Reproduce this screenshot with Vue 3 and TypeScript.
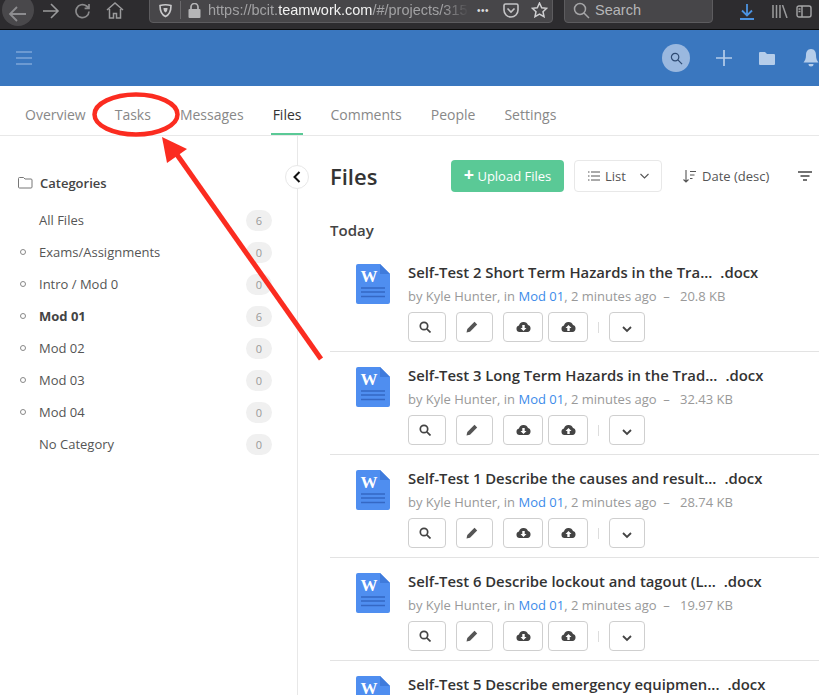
<script setup lang="ts">
const tabs = ['Overview', 'Tasks', 'Messages', 'Files', 'Comments', 'People', 'Settings']

const categories = [
  { name: 'All Files', count: 6, dot: false },
  { name: 'Exams/Assignments', count: 0, dot: true },
  { name: 'Intro / Mod 0', count: 0, dot: true },
  { name: 'Mod 01', count: 6, dot: true, bold: true },
  { name: 'Mod 02', count: 0, dot: true },
  { name: 'Mod 03', count: 0, dot: true },
  { name: 'Mod 04', count: 0, dot: true },
  { name: 'No Category', count: 0, dot: false },
]

const files = [
  { title: 'Self-Test 2 Short Term Hazards in the Tra...', size: '20.8 KB' },
  { title: 'Self-Test 3 Long Term Hazards in the Trad...', size: '32.43 KB' },
  { title: 'Self-Test 1 Describe the causes and result...', size: '28.74 KB' },
  { title: 'Self-Test 6 Describe lockout and tagout (L...', size: '19.97 KB' },
  { title: 'Self-Test 5 Describe emergency equipmen...', size: '21.4 KB' },
]
</script>

<template>
  <div class="page">
    <div class="chrome">
      <span class="nav-back">
        <svg width="20" height="16" viewBox="0 0 20 16" fill="none" stroke="#8d8d90" stroke-width="1.8"><path d="M18 8H2M9 1L2 8l7 7" /></svg>
      </span>
      <svg class="nav" width="18" height="16" viewBox="0 0 18 16" fill="none" stroke="#9a9a9c" stroke-width="1.6"><path d="M1 8h15M9 1l7 7-7 7" /></svg>
      <svg class="nav" width="18" height="16" viewBox="0 0 18 16" fill="none" stroke="#8a8a8c" stroke-width="1.7"><path d="M15 8.5A6.5 6.5 0 1 1 12.5 3L15 5M15 1v4.4h-4.4" /></svg>
      <svg class="nav" width="18" height="17" viewBox="0 0 18 17" fill="none" stroke="#9a9a9c" stroke-width="1.5"><path d="M1 8l8-7 8 7M3.5 7v9h4v-4.5h3V16h4V7" /></svg>
      <div class="urlbar">
        <svg width="15" height="15" viewBox="0 0 15 15" fill="none" stroke="#c9c9cb" stroke-width="1.6"><path d="M2 2.500c3.500-1 7.500-1 11 0 0 5-1 9-5.500 11C3 11.500 2 7.500 2 2.500z" /><path d="M5.500 5h4c0 2-.5 3.500-2 4.500-1.500-1-2-2.500-2-4.500z" fill="#c9c9cb" stroke="none" /></svg>
        <i class="url-sep"></i>
        <svg width="13" height="15" viewBox="0 0 13 15" fill="#b5b5b7" stroke="none"><rect x="0.500" y="6" width="12" height="9" rx="1" /><path d="M3 6V4a3.500 3.500 0 0 1 7 0v2" fill="none" stroke="#b5b5b7" stroke-width="1.700" /></svg>
        <span class="url"><span>https://bcit.</span><b>teamwork.com</b><span>/#/projects/315</span></span>
        <span class="dots">•••</span>
        <svg width="16" height="15" viewBox="0 0 16 15" fill="none" stroke="#c4c4c6" stroke-width="1.600"><path d="M1 2.500C1 1.500 1.700 1 2.500 1h11c.8 0 1.500.5 1.500 1.500V7a7 7 0 0 1-14 0z" /><path d="M4.500 5.500L8 9l3.500-3.500" /></svg>
        <svg width="17" height="16" viewBox="0 0 17 16" fill="none" stroke="#d0d0d2" stroke-width="1.500"><path d="M8.500 1l2.200 4.700 5 .6-3.700 3.400 1 5-4.500-2.500L4 14.700l1-5L1.300 6.300l5-.6z" /></svg>
      </div>
      <div class="searchbar">
        <svg width="17" height="17" viewBox="0 0 17 17" fill="none" stroke="#a5a5a7" stroke-width="1.500"><circle cx="7" cy="7" r="5.500" /><path d="M11 11l5 5" /></svg>
        <span>Search</span>
      </div>
      <svg class="download" width="14" height="16" viewBox="0 0 14 16" fill="none" stroke="#4c93e0" stroke-width="1.800"><path d="M7 0v11M2 6.500L7 11.500l5-5M0 15h14" /></svg>
      <svg class="library" width="16" height="13" viewBox="0 0 16 13" fill="none" stroke="#9a9a9c" stroke-width="1.500"><path d="M1 0v13M4.500 0v13M8 0v13M10.500 0l4.500 13" /></svg>
      <svg class="sidebar-icon" width="16" height="13" viewBox="0 0 16 13" fill="none" stroke="#a5a5a7" stroke-width="1.400"><rect x="1" y="1" width="14" height="11" rx="2" /><path d="M6 1v11M2.500 4H4.500M2.500 6.500H4.500" /></svg>
    </div>

    <header class="topbar">
      <svg class="menu" width="16" height="14" viewBox="0 0 16 14" stroke="#7da6d9" stroke-width="1.300"><path d="M0 1h16M0 7h16M0 13h16" /></svg>
      <span class="spacer"></span>
      <span class="search-circle">
        <svg width="13" height="13" viewBox="0 0 14 14" fill="none" stroke="#2e4a72" stroke-width="1.300"><circle cx="5.500" cy="5.500" r="4" /><path d="M8.500 8.500l4.500 4.500" /></svg>
      </span>
      <svg class="plus" width="16" height="16" viewBox="0 0 16 16" stroke="#b5cdea" stroke-width="1.700"><path d="M8 0v16M0 8h16" /></svg>
      <svg class="folder" width="16" height="13" viewBox="0 0 16 13" fill="#b5cdea"><path d="M0 1a1 1 0 0 1 1-1h5l2 2h7a1 1 0 0 1 1 1v9a1 1 0 0 1-1 1H1a1 1 0 0 1-1-1z" /></svg>
      <svg class="bell" width="16" height="18" viewBox="0 0 16 18" fill="#b5cdea"><path d="M8 0c3.500 0 5 3 5 6 0 4 1 5.500 2.500 7.500H.5C2 11.500 3 10 3 6c0-3 1.500-6 5-6zM5.500 15h5a2.500 2.500 0 0 1-5 0z" /></svg>
    </header>

    <nav class="tabs">
      <a v-for="tab in tabs" :key="tab" :class="{ active: tab === 'Files' }">{{ tab }}</a>
    </nav>

    <div class="content">
      <aside class="sidebar">
        <button class="collapse">
          <svg width="8" height="12" viewBox="0 0 8 12" fill="none" stroke="#111" stroke-width="2"><path d="M6.500 1L1.500 6l5 5" /></svg>
        </button>
        <h3 class="cat-title">
          <svg width="15" height="12" viewBox="0 0 15 12" fill="none" stroke="#777" stroke-width="1"><path d="M.5 1.500a1 1 0 0 1 1-1h4l1.500 1.500h6a1 1 0 0 1 1 1v7a1 1 0 0 1-1 1h-11.500a1 1 0 0 1-1-1z" /></svg>
          Categories
        </h3>
        <ul class="cats">
          <li v-for="cat in categories" :key="cat.name" :class="{ bold: cat.bold }">
            <i :class="{ dot: cat.dot }"></i>
            <span class="cat-name">{{ cat.name }}</span>
            <span class="pill">{{ cat.count }}</span>
          </li>
        </ul>
      </aside>

      <main class="main">
        <div class="toolbar">
          <h1>Files</h1>
          <button class="upload"><b>+</b> Upload Files</button>
          <button class="list">
            <svg width="12" height="10" viewBox="0 0 12 10" stroke="#555" stroke-width="1"><path d="M3 1h9M3 5h9M3 9h9M0 1h1.500M0 5h1.500M0 9h1.500" /></svg>
            <span>List</span>
            <svg class="caret" width="9" height="6" viewBox="0 0 9 6" fill="none" stroke="#555" stroke-width="1.100"><path d="M.5 1l4 4 4-4" /></svg>
          </button>
          <span class="sort">
            <svg width="13" height="13" viewBox="0 0 13 13" fill="none" stroke="#555" stroke-width="1.100"><path d="M3 0v12M.5 9.500L3 12l2.500-2.500M7 1.500h6M7 5h4.500M7 8.500h2.500" /></svg>
            Date (desc)
          </span>
          <svg class="filter" width="14" height="10" viewBox="0 0 14 10" stroke="#444" stroke-width="1.400"><path d="M0 1h14M2.500 5h9M5 9h4" /></svg>
        </div>

        <h2>Today</h2>

        <div v-for="file in files" :key="file.title" class="file">
          <svg class="doc" width="34" height="40" viewBox="0 0 34 40">
            <path d="M2 0h22l10 10v28a2 2 0 0 1-2 2H2a2 2 0 0 1-2-2V2a2 2 0 0 1 2-2z" fill="#4f8ef0" />
            <path d="M24 0l10 10H24z" fill="#3f7bdc" />
            <text x="4.500" y="18" class="doc-w">W</text>
            <path d="M5 24h24M5 28h24M5 32.500h24" stroke="#3568c4" stroke-width="1.600" />
          </svg>
          <div class="file-body">
            <div class="file-title"><span>{{ file.title }}</span><span class="ext">.docx</span></div>
            <div class="meta">by Kyle Hunter, in <a>Mod 01</a>, 2 minutes ago &nbsp;–&nbsp;&nbsp; {{ file.size }}</div>
            <div class="actions">
              <button class="b1">
                <svg width="12" height="12" viewBox="0 0 12 12" fill="none" stroke="#444" stroke-width="1.700"><circle cx="5" cy="5" r="3.700" /><path d="M7.800 7.800L11.500 11.500" /></svg>
              </button>
              <button class="b2">
                <svg width="12" height="12" viewBox="0 0 12 12" fill="#555"><path d="M8.500.8l2.700 2.700L4 10.700.5 11.500l.8-3.500z" /></svg>
              </button>
              <button class="b3">
                <svg width="15" height="12" viewBox="0 0 15 12" fill="#444"><path d="M3.500 11a3.300 3.300 0 0 1-.5-6.500A4.700 4.700 0 0 1 12 4a3.600 3.600 0 0 1-.5 7z" /><path d="M6.300 4h2.400v3H10.500L7.500 10 4.500 7h1.800z" fill="#fff" /></svg>
              </button>
              <button class="b3">
                <svg width="15" height="12" viewBox="0 0 15 12" fill="#444"><path d="M3.500 11a3.300 3.300 0 0 1-.5-6.500A4.700 4.700 0 0 1 12 4a3.600 3.600 0 0 1-.5 7z" /><path d="M6.300 10h2.400V7H10.500L7.500 4 4.500 7h1.800z" fill="#fff" /></svg>
              </button>
              <i class="act-sep"></i>
              <button class="b5">
                <svg width="10" height="7" viewBox="0 0 10 7" fill="none" stroke="#444" stroke-width="1.800"><path d="M1 1l4 4 4-4" /></svg>
              </button>
            </div>
          </div>
        </div>
      </main>
    </div>

    <!-- red annotation drawn over the screenshot -->
    <svg class="markup" width="819" height="695" viewBox="0 0 819 695" fill="none">
      <ellipse cx="136" cy="114.500" rx="41.500" ry="20" stroke="#fb2c20" stroke-width="4.500" />
      <path d="M321 359L173 149" stroke="#fb2c20" stroke-width="5" />
      <path d="M162 137L187 149L167 163z" fill="#fb2c20" />
    </svg>
  </div>
</template>

<style scoped>
.page {
  position: relative;
  width: 819px;
  height: 695px;
  overflow: hidden;
  background: #fff;
  font-family: "Open Sans", sans-serif;
  color: #444;
}

.chrome {
  display: flex;
  align-items: center;
  height: 29px;
  background: #2d2c2f;
  border-bottom: 1px solid #0b0b0b;
  overflow: hidden;
  font-family: "Liberation Sans", sans-serif;
}
.nav-back {
  flex: none;
  display: flex;
  align-items: center;
  justify-content: center;
  width: 32px;
  height: 32px;
  margin: -10px 0 0 2px;
  border-radius: 50%;
  background: #49484b;
}
.nav-back svg {
  margin-top: 9px;
}
.nav {
  flex: none;
  margin: -8px 0 0 8px;
}
.nav + .nav {
  margin-left: 14px;
}
.urlbar {
  flex: none;
  display: flex;
  align-items: center;
  width: 404px;
  height: 30px;
  box-sizing: border-box;
  margin: -14px 0 0 25px;
  padding: 5px 4px 0 8px;
  background: #474649;
  border: 1px solid #5d5c5f;
  border-radius: 4px;
}
.url-sep {
  width: 1px;
  height: 18px;
  margin: 0 7px;
  background: #6a696c;
}
.url {
  flex: 1;
  margin-left: 7px;
  overflow: hidden;
  white-space: nowrap;
  font-size: 14.500px;
  color: #a2a2a4;
  -webkit-mask-image: linear-gradient(to right, #000 90%, transparent);
  mask-image: linear-gradient(to right, #000 90%, transparent);
}
.url b {
  font-weight: 400;
  color: #f2f2f2;
}
.dots {
  margin: 0 14px 0 8px;
  font-size: 10px;
  letter-spacing: 0.5px;
  color: #ddd;
}
.urlbar svg:last-child {
  margin-left: 12px;
}
.searchbar {
  flex: none;
  display: flex;
  align-items: center;
  gap: 5px;
  width: 149px;
  height: 30px;
  box-sizing: border-box;
  margin: -14px 0 0 11px;
  padding: 5px 0 0 8px;
  background: #474649;
  border: 1px solid #5d5c5f;
  border-radius: 4px;
  font-size: 14.500px;
  color: #b5b5b7;
}
.download {
  flex: none;
  margin: -6px 0 0 27px;
}
.library {
  flex: none;
  margin: -6px 0 0 18px;
}
.sidebar-icon {
  flex: none;
  margin: -6px 0 0 8px;
}

.topbar {
  display: flex;
  align-items: center;
  height: 56px;
  padding: 0 0 0 16px;
  background: #3a77bf;
}
.spacer {
  flex: 1;
}
.search-circle {
  display: flex;
  align-items: center;
  justify-content: center;
  width: 28px;
  height: 28px;
  border-radius: 50%;
  background: #9ab8df;
}
.plus {
  margin-left: 26px;
}
.folder {
  margin-left: 27px;
}
.bell {
  margin-left: 28px;
  flex: none;
}

.tabs {
  display: flex;
  gap: 25px;
  height: 50px;
  padding: 0 0 0 23px;
  border-bottom: 1px solid #e8e8e8;
  box-sizing: border-box;
  font-size: 14px;
  line-height: 57px;
  color: #888;
}
.tabs a {
  padding: 0 2px;
  height: 49px;
  box-sizing: border-box;
}
.tabs a.active {
  color: #333;
  border-bottom: 2px solid #5ac996;
}

.content {
  display: flex;
}
.sidebar {
  position: relative;
  flex: none;
  width: 298px;
  height: 560px;
  box-sizing: border-box;
  padding: 0 25px 0 18px;
  border-right: 1px solid #e8e8e8;
}
.collapse {
  position: absolute;
  top: 29px;
  right: -12px;
  width: 24px;
  height: 24px;
  padding: 0;
  display: flex;
  align-items: center;
  justify-content: center;
  background: #fff;
  border: 1px solid #e8e8e8;
  border-radius: 50%;
}
.cat-title {
  display: flex;
  align-items: center;
  gap: 7px;
  margin: 38px 0 0;
  height: 18px;
  font-size: 13px;
  font-weight: 600;
  color: #444;
}
.cats {
  list-style: none;
  margin: 12px 0 0;
  padding: 0;
}
.cats li {
  display: flex;
  align-items: center;
  height: 32px;
  font-size: 13px;
  color: #555;
}
.cats li i {
  flex: none;
  width: 6px;
  height: 6px;
  margin: 0 13px 0 2px;
  box-sizing: border-box;
  border-radius: 50%;
}
.cats li i.dot {
  border: 1px solid #888;
}
.cats li.bold {
  font-weight: 700;
  color: #444;
}
.cat-name {
  flex: 1;
}
.pill {
  width: 26px;
  height: 21px;
  border-radius: 11px;
  background: #f0f0f0;
  font-size: 11px;
  font-weight: 400;
  line-height: 21px;
  text-align: center;
  color: #999;
}

.main {
  flex: none;
  width: 521px;
  padding-left: 32px;
  box-sizing: border-box;
}
.toolbar {
  display: flex;
  align-items: center;
  height: 32px;
  margin-top: 24px;
}
h1 {
  width: 121px;
  margin: 0;
  font-size: 22px;
  font-weight: 600;
  color: #333;
}
.upload {
  width: 113px;
  height: 32px;
  padding: 0;
  border: none;
  border-radius: 4px;
  background: #5ac996;
  color: #fff;
  font: 400 13px "Open Sans", sans-serif;
}
.upload b {
  font-size: 18px;
  font-weight: 700;
  line-height: 12px;
}
.list {
  display: flex;
  align-items: center;
  width: 88px;
  height: 32px;
  margin-left: 10px;
  padding: 0 0 0 13px;
  box-sizing: border-box;
  background: #fff;
  border: 1px solid #e8e8e8;
  border-radius: 4px;
  font: 400 13px "Open Sans", sans-serif;
  color: #555;
}
.list span {
  margin-left: 5px;
}
.caret {
  margin-left: 14px;
}
.sort {
  display: flex;
  align-items: center;
  gap: 6px;
  margin-left: 21px;
  font-size: 13px;
  color: #555;
  white-space: nowrap;
}
.filter {
  margin-left: 29px;
  flex: none;
}
h2 {
  margin: 28px 0 8px;
  height: 21px;
  font-size: 15px;
  font-weight: 600;
  line-height: 21px;
  color: #444;
}

.file {
  display: flex;
  height: 103px;
  box-sizing: border-box;
  padding: 15px 0 0 26px;
  border-bottom: 1px solid #e3e3e3;
}
.doc {
  flex: none;
}
.doc-w {
  font: 700 17px "Liberation Serif", serif;
  fill: #fff;
}
.file-body {
  margin: -4px 0 0 18px;
  min-width: 0;
}
.file-title {
  display: flex;
  gap: 8px;
  height: 24px;
  font-size: 14.850px;
  font-weight: 600;
  line-height: 24px;
  color: #333;
  white-space: nowrap;
}
.meta {
  margin-top: 2px;
  height: 20px;
  font-size: 13px;
  line-height: 20px;
  color: #999;
  white-space: nowrap;
}
.meta a {
  color: #3c8bea;
}
.actions {
  display: flex;
  align-items: center;
  margin-top: 6px;
}
.actions button {
  display: flex;
  align-items: center;
  justify-content: center;
  height: 30px;
  padding: 0;
  background: #fff;
  border: 1px solid #cfcfcf;
  border-radius: 4px;
}
.actions .b1,
.actions .b2 {
  padding-right: 5px;
}
.b1 {
  width: 38px;
}
.b2 {
  width: 37px;
  margin-left: 10px;
}
.b3 {
  width: 40px;
  margin-left: 5px;
}
.b2 + .b3 {
  margin-left: 10px;
}
.act-sep {
  width: 1px;
  height: 11px;
  margin: 0 10px;
  background: #ddd;
}
.actions .b5 {
  width: 36px;
  padding-top: 4px;
}

.markup {
  position: absolute;
  top: 0;
  left: 0;
  pointer-events: none;
}
</style>

<style>
html,
body {
  margin: 0;
  overflow: hidden;
}
</style>
